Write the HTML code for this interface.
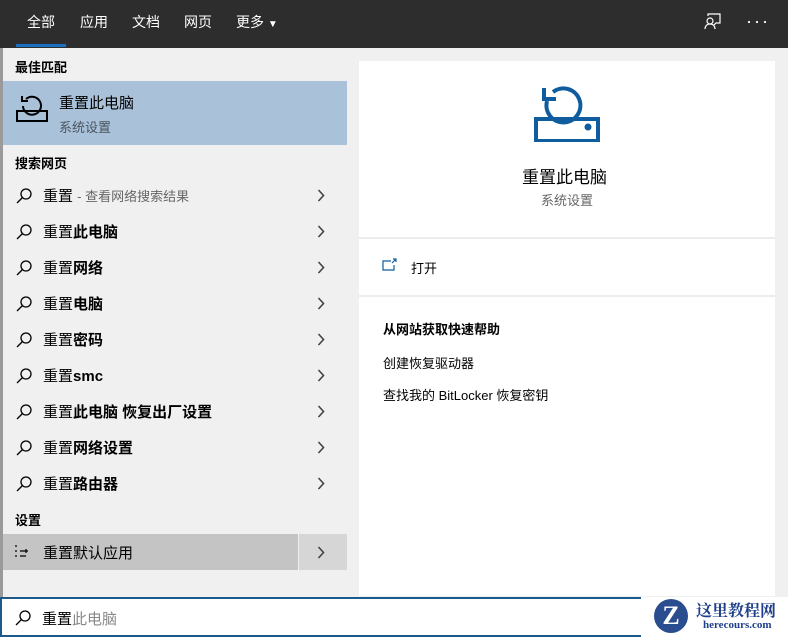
<!DOCTYPE html>
<html><head><meta charset="utf-8"><style>
*{margin:0;padding:0;box-sizing:border-box}
body{width:788px;height:637px;overflow:hidden;background:#f0f0f0;font-family:"Liberation Sans","Noto Sans CJK SC",sans-serif;position:relative;color:#000}
.top{position:absolute;left:0;top:0;width:788px;height:48px;background:#2d2d2d}
.tab{position:absolute;top:12px;color:#fff;font-size:14px}
.ul{position:absolute;left:16px;top:44px;width:50px;height:3px;background:#1a6fc0}
.lb{position:absolute;left:0;top:48px;width:3px;height:550px;background:#9a9a9a}
.h{position:absolute;left:15px;font-size:13px;font-weight:bold}
.best{position:absolute;left:3px;top:81px;width:344px;height:64px;background:#a9c1d9}
.row{position:absolute;left:3px;width:344px;height:36px;font-size:15px}
.row .t{position:absolute;left:40px;top:8px}
.row svg.s{position:absolute;left:12px;top:10px}
.row svg.c{position:absolute;left:314px;top:12px}
.card{position:absolute;left:359px;top:61px;width:416px;height:535px;background:#fff}
.sep{position:absolute;left:359px;width:416px;height:2px;background:#ececec}
.sb{position:absolute;left:0;top:597px;width:641px;height:40px;background:#fff;border:2px solid #1c5a8c;border-right:none}
</style></head><body>
<div class="top">
<span class="tab" style="left:27px">全部</span>
<span class="tab" style="left:80px">应用</span>
<span class="tab" style="left:132px">文档</span>
<span class="tab" style="left:184px">网页</span>
<span class="tab" style="left:236px">更多 <span style="font-size:10px">▼</span></span>
<div class="ul"></div>
<svg style="position:absolute;left:704px;top:13px" width="18" height="18" viewBox="0 0 18 18" fill="none" stroke="#fff" stroke-width="1.2"><circle cx="6" cy="8" r="3"/><path d="M1 16c0-3 2-5 5-5s5 2 5 5M4 3V1h12v9h-4l-2 2"/></svg>
<svg style="position:absolute;left:747px;top:20px" width="20" height="4"><circle cx="2" cy="2" r="1.1" fill="#fff"/><circle cx="10" cy="2" r="1.1" fill="#fff"/><circle cx="18" cy="2" r="1.1" fill="#fff"/></svg>
</div>
<div class="lb"></div>
<div class="h" style="top:57px">最佳匹配</div>
<div class="best">
<svg style="position:absolute;left:12px;top:13px" width="34" height="32" viewBox="0 0 34 32" fill="none" stroke="#000" stroke-width="2"><path d="M8 12A9 9 0 1 0 11 5"/><path d="M7 2v5h6"/><path d="M2 17h30v10H2zM2 17v10"/></svg>
<div style="position:absolute;left:56px;top:11px;font-size:15px">重置此电脑</div>
<div style="position:absolute;left:56px;top:36px;font-size:13px;color:#4a5560">系统设置</div>
</div>
<div class="h" style="top:153px">搜索网页</div>
<div class="row" style="top:177px"><svg class="s" width="18" height="18" viewBox="0 0 18 18" fill="none" stroke="#000" stroke-width="1.3"><circle cx="11" cy="7" r="5"/><path d="M7.5 10.5L2 16"/></svg><span class="t">重置 <span style="font-size:13px;color:#666">- 查看网络搜索结果</span></span><svg class="c" width="8" height="13" viewBox="0 0 8 13" fill="none" stroke="#444" stroke-width="1.6"><path d="M1.5 1l5 5.5-5 5.5"/></svg></div>
<div class="row" style="top:213px"><svg class="s" width="18" height="18" viewBox="0 0 18 18" fill="none" stroke="#000" stroke-width="1.3"><circle cx="11" cy="7" r="5"/><path d="M7.5 10.5L2 16"/></svg><span class="t">重置<b>此电脑</b></span><svg class="c" width="8" height="13" viewBox="0 0 8 13" fill="none" stroke="#444" stroke-width="1.6"><path d="M1.5 1l5 5.5-5 5.5"/></svg></div>
<div class="row" style="top:249px"><svg class="s" width="18" height="18" viewBox="0 0 18 18" fill="none" stroke="#000" stroke-width="1.3"><circle cx="11" cy="7" r="5"/><path d="M7.5 10.5L2 16"/></svg><span class="t">重置<b>网络</b></span><svg class="c" width="8" height="13" viewBox="0 0 8 13" fill="none" stroke="#444" stroke-width="1.6"><path d="M1.5 1l5 5.5-5 5.5"/></svg></div>
<div class="row" style="top:285px"><svg class="s" width="18" height="18" viewBox="0 0 18 18" fill="none" stroke="#000" stroke-width="1.3"><circle cx="11" cy="7" r="5"/><path d="M7.5 10.5L2 16"/></svg><span class="t">重置<b>电脑</b></span><svg class="c" width="8" height="13" viewBox="0 0 8 13" fill="none" stroke="#444" stroke-width="1.6"><path d="M1.5 1l5 5.5-5 5.5"/></svg></div>
<div class="row" style="top:321px"><svg class="s" width="18" height="18" viewBox="0 0 18 18" fill="none" stroke="#000" stroke-width="1.3"><circle cx="11" cy="7" r="5"/><path d="M7.5 10.5L2 16"/></svg><span class="t">重置<b>密码</b></span><svg class="c" width="8" height="13" viewBox="0 0 8 13" fill="none" stroke="#444" stroke-width="1.6"><path d="M1.5 1l5 5.5-5 5.5"/></svg></div>
<div class="row" style="top:357px"><svg class="s" width="18" height="18" viewBox="0 0 18 18" fill="none" stroke="#000" stroke-width="1.3"><circle cx="11" cy="7" r="5"/><path d="M7.5 10.5L2 16"/></svg><span class="t">重置<b>smc</b></span><svg class="c" width="8" height="13" viewBox="0 0 8 13" fill="none" stroke="#444" stroke-width="1.6"><path d="M1.5 1l5 5.5-5 5.5"/></svg></div>
<div class="row" style="top:393px"><svg class="s" width="18" height="18" viewBox="0 0 18 18" fill="none" stroke="#000" stroke-width="1.3"><circle cx="11" cy="7" r="5"/><path d="M7.5 10.5L2 16"/></svg><span class="t">重置<b>此电脑 恢复出厂设置</b></span><svg class="c" width="8" height="13" viewBox="0 0 8 13" fill="none" stroke="#444" stroke-width="1.6"><path d="M1.5 1l5 5.5-5 5.5"/></svg></div>
<div class="row" style="top:429px"><svg class="s" width="18" height="18" viewBox="0 0 18 18" fill="none" stroke="#000" stroke-width="1.3"><circle cx="11" cy="7" r="5"/><path d="M7.5 10.5L2 16"/></svg><span class="t">重置<b>网络设置</b></span><svg class="c" width="8" height="13" viewBox="0 0 8 13" fill="none" stroke="#444" stroke-width="1.6"><path d="M1.5 1l5 5.5-5 5.5"/></svg></div>
<div class="row" style="top:465px"><svg class="s" width="18" height="18" viewBox="0 0 18 18" fill="none" stroke="#000" stroke-width="1.3"><circle cx="11" cy="7" r="5"/><path d="M7.5 10.5L2 16"/></svg><span class="t">重置<b>路由器</b></span><svg class="c" width="8" height="13" viewBox="0 0 8 13" fill="none" stroke="#444" stroke-width="1.6"><path d="M1.5 1l5 5.5-5 5.5"/></svg></div>
<div class="h" style="top:510px">设置</div>
<div style="position:absolute;left:3px;top:534px;width:295px;height:36px;background:#c4c4c4"></div>
<div style="position:absolute;left:299px;top:534px;width:48px;height:36px;background:#d6d6d6"></div>
<div class="row" style="top:534px"><svg style="position:absolute;left:11px;top:11px" width="15" height="14" viewBox="0 0 15 14" fill="none" stroke="#000" stroke-width="1.2"><path d="M1 1h2M1 6h2M1 11h2M6 6h8M6 11h6M12 4v4"/></svg><span class="t">重置默认应用</span><svg class="c" width="8" height="13" viewBox="0 0 8 13" fill="none" stroke="#444" stroke-width="1.6"><path d="M1.5 1l5 5.5-5 5.5"/></svg></div>
<div class="card"></div>
<svg style="position:absolute;left:533px;top:84px" width="68" height="58" viewBox="0 0 68 58" fill="none" stroke="#0f5c9e" stroke-width="4"><path d="M14 17A17 17 0 1 0 20 8"/><path d="M11 4v11h12"/><path d="M3 35h62v22H3z"/><circle cx="55" cy="43" r="1.5" fill="#0f5c9e"/></svg>
<div style="position:absolute;left:522px;top:163px;font-size:17px">重置此电脑</div>
<div style="position:absolute;left:541px;top:190px;font-size:13px;color:#666">系统设置</div>
<div class="sep" style="top:237px"></div>
<svg style="position:absolute;left:382px;top:258px" width="16" height="14" viewBox="0 0 16 14" fill="none" stroke="#0f5c9e" stroke-width="1.2"><path d="M9 3H1v9h11V7M11 1h3v3M14 1l-4 4"/></svg>
<div style="position:absolute;left:411px;top:258px;font-size:13px">打开</div>
<div class="sep" style="top:295px"></div>
<div style="position:absolute;left:383px;top:319px;font-size:13px;font-weight:bold">从网站获取快速帮助</div>
<div style="position:absolute;left:383px;top:353px;font-size:13px">创建恢复驱动器</div>
<div style="position:absolute;left:383px;top:385px;font-size:13px">查找我的 BitLocker 恢复密钥</div>
<div class="sb">
<svg style="position:absolute;left:12px;top:10px" width="18" height="18" viewBox="0 0 18 18" fill="none" stroke="#000" stroke-width="1.3"><circle cx="11" cy="7" r="5"/><path d="M7.5 10.5L2 16"/></svg>
<span style="position:absolute;left:40px;top:9px;font-size:15px">重置<span style="color:#888">此电脑</span></span>
</div>
<div style="position:absolute;left:641px;top:597px;width:147px;height:40px;background:#fff"></div>
<div style="position:absolute;left:654px;top:599px;width:34px;height:34px;border-radius:50%;background:#2a4d8f;color:#fff;font:bold 26px 'Liberation Serif',serif;text-align:center;line-height:34px">Z</div>
<div style="position:absolute;left:696px;top:598px;font:bold 16px 'Noto Serif CJK SC',serif;color:#1e3f8a">这里教程网</div>
<div style="position:absolute;left:703px;top:619px;font:bold 11px 'Liberation Serif',serif;color:#1e3f8a">herecours.com</div>
</body></html>
